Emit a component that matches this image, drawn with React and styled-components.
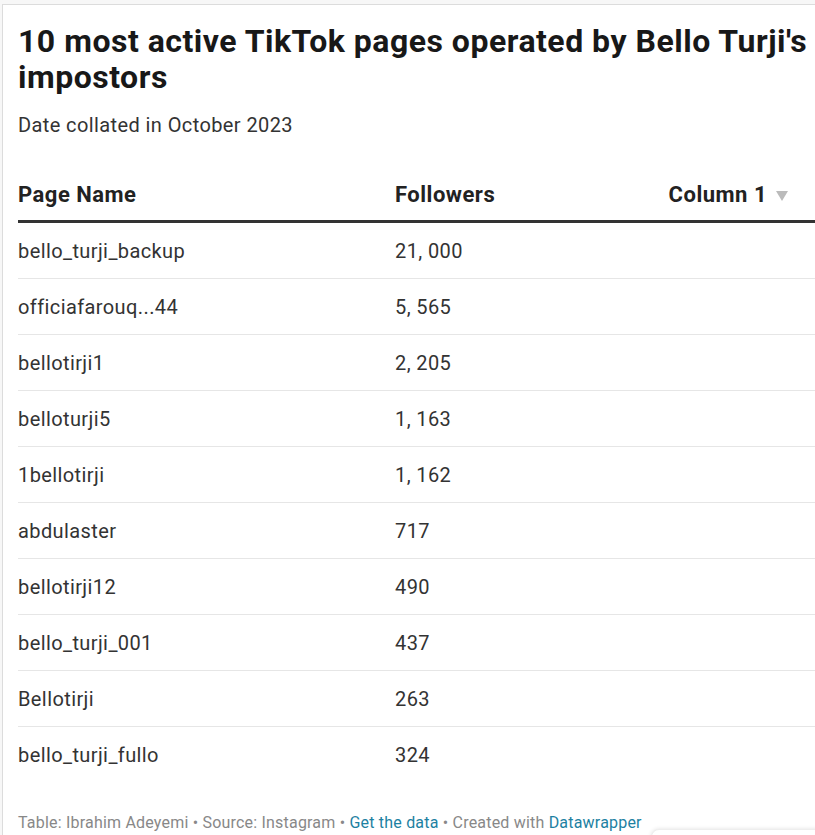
import React from 'react';
import styled, { createGlobalStyle } from 'styled-components';

const GlobalStyle = createGlobalStyle`
  html, body {
    margin: 0;
    padding: 0;
    background: #f7f7f7;
    overflow: hidden;
  }
  body {
    font-family: Roboto, 'Liberation Sans', Arial, sans-serif;
  }
`;

const Frame = styled.div`
  margin: 4px 0 0 2px;
  height: 831px;
  background: white;
  border-top: 1px solid #dcdcdc;
  border-left: 1px solid #dcdcdc;
  box-sizing: border-box;
  padding: 18px 0 0 15px;
  position: relative;
  overflow: hidden;
`;

const Title = styled.h1`
  margin: 0;
  font-size: 32px;
  line-height: 36px;
  font-weight: 700;
  color: #181818;
  letter-spacing: 0.5px;
`;

const Subtitle = styled.p`
  margin: 18px 0 0 0;
  font-size: 20px;
  line-height: 24px;
  color: #333;
  letter-spacing: 0.4px;
`;

const Table = styled.div`
  margin-top: 35px;
  width: 820px;
`;

const HeaderRow = styled.div`
  display: grid;
  grid-template-columns: 377px 1fr 260px;
  align-items: center;
  height: 51px;
  border-bottom: 3px solid #333;
  box-sizing: border-box;
  padding-bottom: 3px;
`;

const HeadCell = styled.div`
  font-size: 22px;
  font-weight: 700;
  color: #222;
  letter-spacing: 0.5px;
  padding-right: ${(p) => (p.$right ? '50px' : '0')};
  display: flex;
  align-items: center;
  justify-content: ${(p) => (p.$right ? 'flex-end' : 'flex-start')};
  gap: 9px;
`;

const SortArrow = styled.span`
  width: 0;
  height: 0;
  border-left: 6px solid transparent;
  border-right: 6px solid transparent;
  border-top: 10px solid #bbb;
  margin-top: 2px;
`;

const Row = styled.div`
  display: grid;
  grid-template-columns: 377px 1fr 260px;
  align-items: center;
  height: 56px;
  border-bottom: 1px solid ${(p) => (p.$last ? 'transparent' : '#e6e6e6')};
  box-sizing: border-box;
  font-size: 20px;
  letter-spacing: 0.4px;
  color: #333;
`;

const Cell = styled.div`
  white-space: nowrap;
`;

const Footer = styled.div`
  margin-top: 30px;
  font-size: 16px;
  letter-spacing: 0.2px;
  color: #888;
`;

const Link = styled.a`
  color: #1d81a2;
  text-decoration: none;
`;

const Floating = styled.div`
  position: absolute;
  left: 648px;
  top: 824px;
  width: 200px;
  height: 40px;
  border-radius: 8px;
  background: white;
  border: 1px solid #eee;
  box-shadow: 0 0 4px rgba(0, 0, 0, 0.12);
`;

const rows = [
  ['bello_turji_backup', '21, 000'],
  ['officiafarouq...44', '5, 565'],
  ['bellotirji1', '2, 205'],
  ['belloturji5', '1, 163'],
  ['1bellotirji', '1, 162'],
  ['abdulaster', '717'],
  ['bellotirji12', '490'],
  ['bello_turji_001', '437'],
  ['Bellotirji', '263'],
  ['bello_turji_fullo', '324'],
];

export default function App() {
  return (
    <>
      <GlobalStyle />
      <Frame>
        <Title>10 most active TikTok pages operated by Bello Turji's impostors</Title>
        <Subtitle>Date collated in October 2023</Subtitle>
        <Table>
          <HeaderRow>
            <HeadCell>Page Name</HeadCell>
            <HeadCell>Followers</HeadCell>
            <HeadCell $right>
              Column 1 <SortArrow />
            </HeadCell>
          </HeaderRow>
          {rows.map(([name, followers], i) => (
            <Row key={name} $last={i === rows.length - 1}>
              <Cell>{name}</Cell>
              <Cell>{followers}</Cell>
              <Cell />
            </Row>
          ))}
        </Table>
        <Footer>
          Table: Ibrahim Adeyemi • Source: Instagram • <Link href="#">Get the data</Link> • Created with{' '}
          <Link href="#">Datawrapper</Link>
        </Footer>
        <Floating />
      </Frame>
    </>
  );
}
